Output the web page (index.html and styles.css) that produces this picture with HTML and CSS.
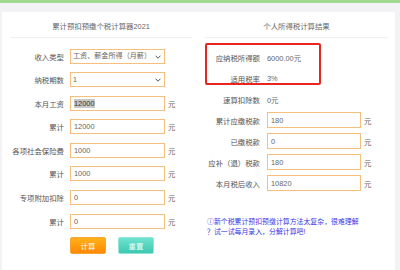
FILE: index.html
```html
<!DOCTYPE html>
<html lang="zh-CN">
  <head>
    <meta charset="UTF-8" />
    <meta name="viewport" content="width=device-width, initial-scale=1.0" />
    <title>累计预扣预缴个税计算器2021</title>
    <link rel="stylesheet" href="styles.css">
  </head>
  <body>
    <div class="calc">
      <div class="panel panel-form">
        <div class="panel-title">累计预扣预缴个税计算器2021</div>
        <div class="form-rows">
          <div class="row">
            <label>收入类型</label>
            <div class="select">
              <select>
                <option>工资、薪金所得（月薪）</option>
              </select>
              <svg class="chev" width="6" height="4" viewBox="0 0 6 4"><path d="M0.5 0.7 L3 3.2 L5.5 0.7" fill="none" stroke="#555" stroke-width="1"/></svg>
            </div>
          </div>
          <div class="row">
            <label>纳税期数</label>
            <div class="select">
              <select>
                <option>1</option>
              </select>
              <svg class="chev" width="6" height="4" viewBox="0 0 6 4"><path d="M0.5 0.7 L3 3.2 L5.5 0.7" fill="none" stroke="#555" stroke-width="1"/></svg>
            </div>
          </div>
          <div class="row">
            <label>本月工资</label>
            <div class="fake-input"><span class="picked">12000</span></div>
            <span class="unit">元</span>
          </div>
          <div class="row">
            <label>累计</label>
            <input type="text" value="12000" />
            <span class="unit">元</span>
          </div>
          <div class="row">
            <label>各项社会保险费</label>
            <input type="text" value="1000" />
            <span class="unit">元</span>
          </div>
          <div class="row">
            <label>累计</label>
            <input type="text" value="1000" />
            <span class="unit">元</span>
          </div>
          <div class="row">
            <label>专项附加扣除</label>
            <input type="text" value="0" />
            <span class="unit">元</span>
          </div>
          <div class="row">
            <label>累计</label>
            <input type="text" value="0" />
            <span class="unit">元</span>
          </div>
          <div class="row buttons">
            <label></label>
            <button class="btn btn-calc">计算</button>
            <button class="btn btn-reset">重置</button>
          </div>
        </div>
      </div>

      <div class="panel panel-result">
        <div class="panel-title">个人所得税计算结果</div>
        <div class="result-rows">
          <div class="highlight"></div>
          <div class="row">
            <label>应纳税所得额</label>
            <span class="value">6000.00元</span>
          </div>
          <div class="row">
            <label>适用税率</label>
            <span class="value">3%</span>
          </div>
          <div class="row">
            <label>速算扣除数</label>
            <span class="value">0元</span>
          </div>
          <div class="row">
            <label>累计应缴税款</label>
            <input type="text" value="180" />
            <span class="unit">元</span>
          </div>
          <div class="row">
            <label>已缴税款</label>
            <input type="text" value="0" />
            <span class="unit">元</span>
          </div>
          <div class="row">
            <label>应补（退）税款</label>
            <input type="text" value="180" />
            <span class="unit">元</span>
          </div>
          <div class="row">
            <label>本月税后收入</label>
            <input type="text" value="10820" />
            <span class="unit">元</span>
          </div>
        </div>
        <p class="tip">ⓘ新个税累计预扣预缴计算方法太复杂，很难理解<br />？试一试每月录入，分解计算吧!</p>
      </div>
    </div>
  </body>
</html>
```
FILE: styles.css
```css
body {
  margin: 0;
  background: #f3f3f5;
  border-top: 3px solid #9fdc8f;
  font-family: "Liberation Sans", "Noto Sans CJK SC", sans-serif;
  font-size: 7.4px;
  color: #555;
  height: 267px;
  overflow: hidden;
}

.calc {
  display: flex;
  margin: 9px 5px 0 2px;
  background: #fff;
  height: 260px;
}

.panel-form {
  width: 198px;
}

.panel-result {
  flex: 1;
}

.panel-title {
  height: 25px;
  line-height: 30px;
  text-align: center;
  color: #666;
  border-bottom: 1px solid #f0f0f0;
  margin: 0 8px;
}

.panel-result .panel-title {
  margin: 0 7px 0 5px;
}

.row {
  display: flex;
  align-items: center;
}

.row label {
  text-align: right;
  white-space: nowrap;
}

/* left form */
.form-rows {
  display: flex;
  flex-direction: column;
  gap: 8.6px;
  padding-top: 10.5px;
}

.form-rows .row {
  height: 15px;
}

.form-rows label {
  width: 62px;
  margin-right: 6px;
}

input,
.fake-input,
select {
  box-sizing: border-box;
  height: 15px;
  border: 1px solid #f6bf7e;
  background: #fff;
  font-family: inherit;
  font-size: 7.4px;
  color: #666;
  padding: 0 3px;
  outline: none;
  margin: 0;
}

.form-rows input,
.fake-input {
  width: 95px;
}

.fake-input {
  display: flex;
  align-items: center;
}

.picked {
  background: #c8c8c8;
  color: #333;
}

.select {
  position: relative;
  width: 95px;
}

.select select {
  width: 100%;
  appearance: none;
  -webkit-appearance: none;
  border-radius: 0;
  font-size: 7.1px;
  padding: 0 2px;
}

.chev {
  position: absolute;
  right: 4px;
  top: 6px;
}

.unit {
  margin-left: 3px;
  color: #666;
}

.buttons {
  height: 17px !important;
}

.btn {
  width: 36px;
  height: 17px;
  border-radius: 2px;
  font-family: inherit;
  font-size: 7.4px;
  color: #fff;
  padding: 0;
  cursor: pointer;
}

.btn-calc {
  background: linear-gradient(#ffb11a, #ff8800);
  border: 1px solid #f7a532;
}

.btn-reset {
  margin-left: 12px;
  background: linear-gradient(#6ee3cf, #3fc7b1);
  border: 1px solid #8fe6d7;
  color: #e9fffb;
}

/* right result */
.result-rows {
  position: relative;
  display: flex;
  flex-direction: column;
  gap: 5px;
  padding-top: 11px;
}

.result-rows .row {
  height: 16px;
}

.result-rows label {
  width: 60px;
  margin-right: 7px;
}

.result-rows input {
  width: 94px;
  height: 16px;
}

.value {
  color: #666;
}

.highlight {
  position: absolute;
  left: 5px;
  top: 5px;
  width: 112px;
  height: 38px;
  border: 2px solid #e8251f;
  border-radius: 2px;
}

.tip {
  margin: 26px 0 0 7px;
  white-space: nowrap;
  line-height: 10px;
  color: #3b35e6;
  font-size: 6.9px;
}
```
